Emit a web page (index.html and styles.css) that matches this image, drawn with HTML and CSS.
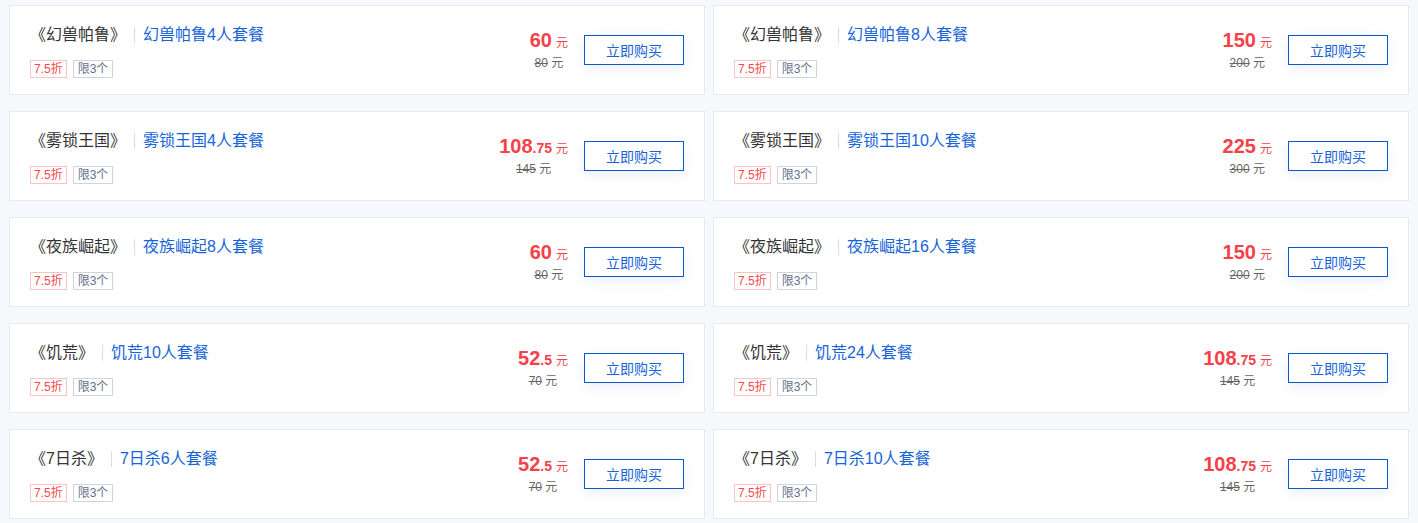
FILE: index.html
```html
<!DOCTYPE html>
<html lang="zh-CN">
<head>
<meta charset="utf-8">
<title>套餐</title>
<link rel="stylesheet" href="styles.css">
</head>
<body>
<div class="grid">
  <div class="card">
    <div class="info">
      <div class="title-row"><span class="game">《幻兽帕鲁》</span><span class="sep"></span><span class="pkg">幻兽帕鲁4人套餐</span></div>
      <div class="tags"><span class="tag tag-red">7.5折</span><span class="tag tag-gray">限3个</span></div>
    </div>
    <div class="price"><div class="now"><b>60</b><span class="unit">元</span></div><div class="old"><del>80</del> 元</div></div>
    <button class="buy">立即购买</button>
  </div>
  <div class="card">
    <div class="info">
      <div class="title-row"><span class="game">《幻兽帕鲁》</span><span class="sep"></span><span class="pkg">幻兽帕鲁8人套餐</span></div>
      <div class="tags"><span class="tag tag-red">7.5折</span><span class="tag tag-gray">限3个</span></div>
    </div>
    <div class="price"><div class="now"><b>150</b><span class="unit">元</span></div><div class="old"><del>200</del> 元</div></div>
    <button class="buy">立即购买</button>
  </div>
  <div class="card">
    <div class="info">
      <div class="title-row"><span class="game">《雾锁王国》</span><span class="sep"></span><span class="pkg">雾锁王国4人套餐</span></div>
      <div class="tags"><span class="tag tag-red">7.5折</span><span class="tag tag-gray">限3个</span></div>
    </div>
    <div class="price"><div class="now"><b>108</b><b class="dec">.75</b><span class="unit">元</span></div><div class="old"><del>145</del> 元</div></div>
    <button class="buy">立即购买</button>
  </div>
  <div class="card">
    <div class="info">
      <div class="title-row"><span class="game">《雾锁王国》</span><span class="sep"></span><span class="pkg">雾锁王国10人套餐</span></div>
      <div class="tags"><span class="tag tag-red">7.5折</span><span class="tag tag-gray">限3个</span></div>
    </div>
    <div class="price"><div class="now"><b>225</b><span class="unit">元</span></div><div class="old"><del>300</del> 元</div></div>
    <button class="buy">立即购买</button>
  </div>
  <div class="card">
    <div class="info">
      <div class="title-row"><span class="game">《夜族崛起》</span><span class="sep"></span><span class="pkg">夜族崛起8人套餐</span></div>
      <div class="tags"><span class="tag tag-red">7.5折</span><span class="tag tag-gray">限3个</span></div>
    </div>
    <div class="price"><div class="now"><b>60</b><span class="unit">元</span></div><div class="old"><del>80</del> 元</div></div>
    <button class="buy">立即购买</button>
  </div>
  <div class="card">
    <div class="info">
      <div class="title-row"><span class="game">《夜族崛起》</span><span class="sep"></span><span class="pkg">夜族崛起16人套餐</span></div>
      <div class="tags"><span class="tag tag-red">7.5折</span><span class="tag tag-gray">限3个</span></div>
    </div>
    <div class="price"><div class="now"><b>150</b><span class="unit">元</span></div><div class="old"><del>200</del> 元</div></div>
    <button class="buy">立即购买</button>
  </div>
  <div class="card">
    <div class="info">
      <div class="title-row"><span class="game">《饥荒》</span><span class="sep"></span><span class="pkg">饥荒10人套餐</span></div>
      <div class="tags"><span class="tag tag-red">7.5折</span><span class="tag tag-gray">限3个</span></div>
    </div>
    <div class="price"><div class="now"><b>52</b><b class="dec">.5</b><span class="unit">元</span></div><div class="old"><del>70</del> 元</div></div>
    <button class="buy">立即购买</button>
  </div>
  <div class="card">
    <div class="info">
      <div class="title-row"><span class="game">《饥荒》</span><span class="sep"></span><span class="pkg">饥荒24人套餐</span></div>
      <div class="tags"><span class="tag tag-red">7.5折</span><span class="tag tag-gray">限3个</span></div>
    </div>
    <div class="price"><div class="now"><b>108</b><b class="dec">.75</b><span class="unit">元</span></div><div class="old"><del>145</del> 元</div></div>
    <button class="buy">立即购买</button>
  </div>
  <div class="card">
    <div class="info">
      <div class="title-row"><span class="game">《7日杀》</span><span class="sep"></span><span class="pkg">7日杀6人套餐</span></div>
      <div class="tags"><span class="tag tag-red">7.5折</span><span class="tag tag-gray">限3个</span></div>
    </div>
    <div class="price"><div class="now"><b>52</b><b class="dec">.5</b><span class="unit">元</span></div><div class="old"><del>70</del> 元</div></div>
    <button class="buy">立即购买</button>
  </div>
  <div class="card">
    <div class="info">
      <div class="title-row"><span class="game">《7日杀》</span><span class="sep"></span><span class="pkg">7日杀10人套餐</span></div>
      <div class="tags"><span class="tag tag-red">7.5折</span><span class="tag tag-gray">限3个</span></div>
    </div>
    <div class="price"><div class="now"><b>108</b><b class="dec">.75</b><span class="unit">元</span></div><div class="old"><del>145</del> 元</div></div>
    <button class="buy">立即购买</button>
  </div>
</div>
</body>
</html>
```
FILE: styles.css
```css
* { box-sizing: border-box; }
html, body { margin: 0; padding: 0; }
body {
  background: #f7f8fb;
  font-family: "Liberation Sans", "Noto Sans CJK SC", sans-serif;
  color: #333;
}
.grid {
  display: grid;
  grid-template-columns: 1fr 1fr;
  column-gap: 8px;
  row-gap: 16px;
  padding: 5px 9px;
}
.card {
  height: 90px;
  background: #fff;
  border: 1px solid #e6e9f0;
  display: flex;
  align-items: center;
  padding: 0 20px;
}
.info {
  flex: 1;
  display: flex;
  flex-direction: column;
  padding-top: 3px;
}
.title-row {
  display: flex;
  align-items: center;
  height: 20px;
  font-size: 16px;
  line-height: 20px;
}
.game {
  color: #333;
}
.sep {
  width: 1px;
  height: 16px;
  background: #d8dce4;
  margin: 0 8px;
}
.pkg { color: #1764d8; }
.tags {
  display: flex;
  gap: 6px;
  margin-top: 15px;
}
.tag {
  font-size: 12px;
  line-height: 16px;
  height: 18px;
  padding: 0 3px;
  border: 1px solid;
}
.tag-red { color: #f5484a; border-color: #fdc4c4; }
.tag-gray { color: #66708a; border-color: #cfd4de; padding: 0 4px; }
.price {
  text-align: center;
  margin-right: 16px;
  white-space: nowrap;
}
.now {
  color: #f5414a;
  line-height: 22px;
}
.now b {
  font-size: 20px;
  font-weight: 700;
}
.now b.dec { font-size: 14px; }
.unit {
  font-size: 12px;
  margin-left: 4px;
}
.old {
  font-size: 12px;
  color: #666;
  line-height: 16px;
  margin-top: 1px;
}
.old del { text-decoration: line-through; }
.buy {
  width: 100px;
  height: 30px;
  background: #fff;
  border: 1px solid #0b57d0;
  color: #1764d8;
  font-family: inherit;
  font-size: 14px;
  padding: 0;
  box-shadow: 0 4px 14px rgba(40, 80, 160, 0.09);
  cursor: pointer;
}
```
